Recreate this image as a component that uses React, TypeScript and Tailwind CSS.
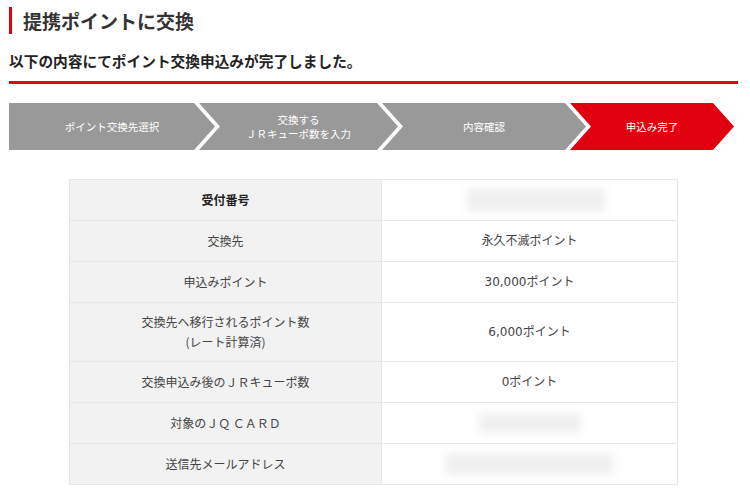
import React from "react";

const steps = [
  {
    lines: ["ポイント交換先選択"],
    cls: "w-[206px] bg-[#999999] [clip-path:polygon(0_0,185px_0,206px_50%,185px_100%,0_100%)]",
  },
  {
    lines: ["交換する", "ＪＲキューポ数を入力"],
    cls: "w-[199px] -ml-[16px] bg-[#999999] [clip-path:polygon(0_0,178px_0,199px_50%,178px_100%,0_100%,21px_50%)]",
  },
  {
    lines: ["内容確認"],
    cls: "w-[204px] -ml-[16px] bg-[#999999] [clip-path:polygon(0_0,183px_0,204px_50%,183px_100%,0_100%,21px_50%)]",
  },
  {
    lines: ["申込み完了"],
    cls: "w-[164px] -ml-[16px] bg-[#e1000f] [clip-path:polygon(0_0,143px_0,164px_50%,143px_100%,0_100%,21px_50%)]",
  },
];

type Row = {
  label: React.ReactNode;
  value: React.ReactNode;
  h: string;
  bold?: boolean;
};

const Blur = ({ cls }: { cls: string }) => (
  <div className={"mx-auto rounded-sm bg-[#f0f0f0] blur-[4px] " + cls} />
);

const rows: Row[] = [
  { label: "受付番号", value: <Blur cls="w-[138px] h-[24px] translate-x-[6px]" />, h: "h-[41px]", bold: true },
  { label: "交換先", value: "永久不滅ポイント", h: "h-[41px]" },
  { label: "申込みポイント", value: "30,000ポイント", h: "h-[41px]" },
  {
    label: (
      <>
        交換先へ移行されるポイント数
        <br />
        (レート計算済)
      </>
    ),
    value: "6,000ポイント",
    h: "h-[59px]",
  },
  { label: "交換申込み後のＪＲキューポ数", value: "0ポイント", h: "h-[41px]" },
  { label: "対象のＪＱ ＣＡＲＤ", value: <Blur cls="w-[102px] h-[20px]" />, h: "h-[41px]" },
  { label: "送信先メールアドレス", value: <Blur cls="w-[168px] h-[22px]" />, h: "h-[41px]" },
];

export default function App() {
  return (
    <div
      className="w-[750px] h-[492px] overflow-hidden bg-white text-[#333333]"
      style={{ fontFamily: '"Noto Sans CJK JP", "Noto Sans", sans-serif' }}
    >
      <div className="ml-[9px] w-[729px]">
        <div className="mt-[7px] h-[27px] border-l-[3px] border-[#e1000f] pl-[11px] text-[19px] font-bold leading-[27px]">
          提携ポイントに交換
        </div>
        <div className="mt-[17px] border-b-[3px] border-[#e1000f] pb-[10px] text-[14.7px] font-bold leading-[20px] text-[#222222]">
          以下の内容にてポイント交換申込みが完了しました。
        </div>
        <div className="mt-[19px] flex h-[47px]">
          {steps.map((s, i) => (
            <div
              key={i}
              className={
                "flex h-full flex-col items-center justify-center text-[10.5px] leading-[14px] text-white " +
                s.cls
              }
            >
              {s.lines.map((l, j) => (
                <span key={j}>{l}</span>
              ))}
            </div>
          ))}
        </div>
        <table className="mx-auto mt-[29px] w-[609px] border-collapse border border-[#e6e6e6] text-[12px] leading-[20px] text-[#444444]">
          <tbody>
            {rows.map((r, i) => (
              <tr key={i} className={r.h}>
                <td
                  className={
                    "w-[312px] border border-[#e6e6e6] bg-[#f2f2f2] p-0 text-center align-middle " +
                    (r.bold ? "font-bold text-[#222222]" : "")
                  }
                >
                  {r.label}
                </td>
                <td className="border border-[#e6e6e6] bg-white p-0 text-center align-middle font-['DejaVu_Sans','Noto_Sans_CJK_JP',sans-serif]">
                  {r.value}
                </td>
              </tr>
            ))}
          </tbody>
        </table>
      </div>
    </div>
  );
}
